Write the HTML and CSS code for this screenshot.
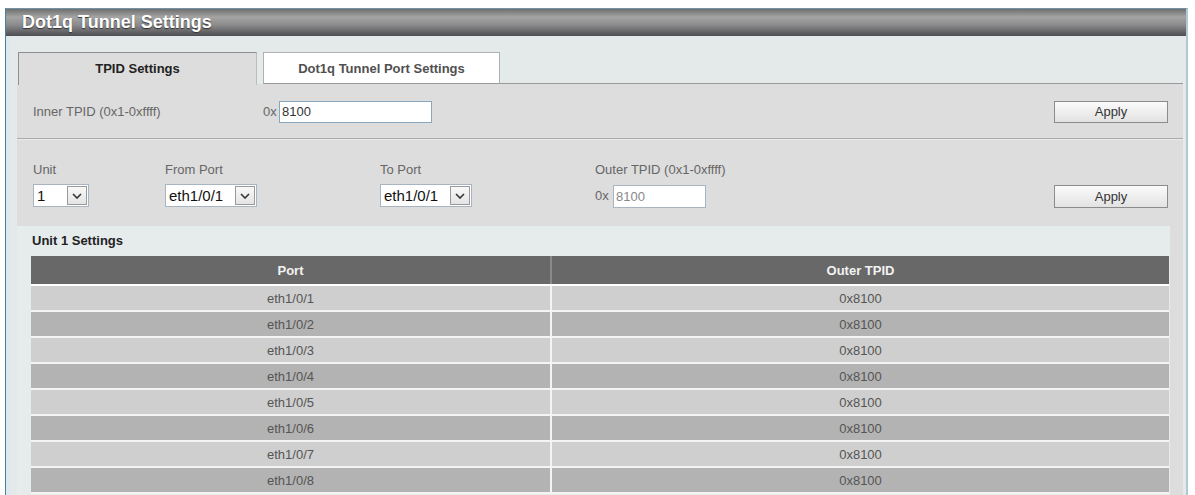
FILE: index.html
```html
<!DOCTYPE html>
<html>
<head>
<meta charset="utf-8">
<title>Dot1q Tunnel Settings</title>
<link rel="stylesheet" href="styles.css">
</head>
<body>
<div class="panel">
  <div class="title">Dot1q Tunnel Settings</div>
  <div class="body">
    <div class="tabs">
      <div class="tab active">TPID Settings</div>
      <div class="tab">Dot1q Tunnel Port Settings</div>
      <div class="tab-rest"></div>
    </div>
    <div class="pane">
      <div class="row-inner">
        <span class="label inner-label">Inner TPID (0x1-0xffff)</span>
        <span class="prefix">0x</span>
        <div class="input inner-input">8100</div>
        <div class="spacer"></div>
        <div class="btn">Apply</div>
      </div>
      <div class="sep"></div>
      <div class="row-outer">
        <div class="field f-unit">
          <span class="label">Unit</span>
          <div class="select s-unit"><span class="sval">1</span><span class="sbtn"><svg width="10" height="6" viewBox="0 0 10 6"><path d="M1 1 L5 5 L9 1" fill="none" stroke="#333" stroke-width="1.6"/></svg></span></div>
        </div>
        <div class="field f-from">
          <span class="label">From Port</span>
          <div class="select s-port"><span class="sval">eth1/0/1</span><span class="sbtn"><svg width="10" height="6" viewBox="0 0 10 6"><path d="M1 1 L5 5 L9 1" fill="none" stroke="#333" stroke-width="1.6"/></svg></span></div>
        </div>
        <div class="field f-to">
          <span class="label">To Port</span>
          <div class="select s-port"><span class="sval">eth1/0/1</span><span class="sbtn"><svg width="10" height="6" viewBox="0 0 10 6"><path d="M1 1 L5 5 L9 1" fill="none" stroke="#333" stroke-width="1.6"/></svg></span></div>
        </div>
        <div class="field f-outer">
          <span class="label">Outer TPID (0x1-0xffff)</span>
          <div class="outer-line"><span class="prefix">0x</span><div class="input outer-input">8100</div></div>
        </div>
        <div class="spacer"></div>
        <div class="btn btn2">Apply</div>
      </div>
      <div class="unitbox">
        <div class="unit-title">Unit 1 Settings</div>
        <table class="grid">
          <thead><tr><th class="c1">Port</th><th>Outer TPID</th></tr></thead>
          <tbody>
            <tr class="odd"><td>eth1/0/1</td><td>0x8100</td></tr>
            <tr class="even"><td>eth1/0/2</td><td>0x8100</td></tr>
            <tr class="odd"><td>eth1/0/3</td><td>0x8100</td></tr>
            <tr class="even"><td>eth1/0/4</td><td>0x8100</td></tr>
            <tr class="odd"><td>eth1/0/5</td><td>0x8100</td></tr>
            <tr class="even"><td>eth1/0/6</td><td>0x8100</td></tr>
            <tr class="odd"><td>eth1/0/7</td><td>0x8100</td></tr>
            <tr class="even"><td>eth1/0/8</td><td>0x8100</td></tr>
          </tbody>
        </table>
      </div>
    </div>
  </div>
</div>
</body>
</html>
```

FILE: styles.css
```css
html, body {
  margin: 0;
  padding: 0;
  background: #ffffff;
  overflow: hidden;
}
body {
  font-family: "Liberation Sans", Arial, sans-serif;
  height: 495px;
}
.panel {
  margin: 8px 0 0 5px;
  width: 1180px;
  border-top: 1px solid #7394a6;
  border-left: 1px solid #4b8190;
  border-right: 2px solid #b3c8d3;
  height: 486px;
  overflow: hidden;
  background: #e4e9ea;
}
.title {
  height: 27px;
  line-height: 27px;
  padding-left: 16px;
  color: #ffffff;
  font-weight: bold;
  font-size: 18px;
  text-shadow: 0 1px 1px #333;
  background: linear-gradient(#6f6f70 0%, #a4a4a4 30%, #8a8a8c 60%, #4d4d52 100%);
}
.body {
  padding: 16px 3px 0 7px;
  border-left: 4px solid #dce9f1;
}
.tabs {
  display: flex;
  align-items: flex-end;
  height: 32px;
  box-sizing: border-box;
}
.tab {
  box-sizing: border-box;
  height: 32px;
  line-height: 32px;
  text-align: center;
  font-size: 13px;
  font-weight: bold;
  color: #505050;
  background: #fff;
  border: 1px solid #b0b0b0;
  border-bottom: 1px solid #9a9a9a;
  width: 237px;
  margin-left: 6px;
}
.tab.active {
  margin-left: 1px;
  width: 239px;
  height: 33px;
  margin-bottom: -1px;
  border: 1px solid #8e8e8e;
  border-bottom: none;
  border-right: 1px solid #bcbcbc;
  background: #dddddd;
  color: #222;
}
.tab-rest {
  flex: 1;
  border-bottom: 1px solid #9a9a9a;
  height: 32px;
  box-sizing: border-box;
}
.pane {
  background: #dddddd;
  height: 430px;
}
.label {
  font-size: 13px;
  color: #666;
}
.prefix {
  font-size: 13px;
  color: #666;
  width: 16px;
}
.row-inner {
  display: flex;
  align-items: center;
  height: 54px;
  padding: 0 15px 0 16px;
}
.inner-label {
  width: 230px;
}
.input {
  box-sizing: border-box;
  background: #fff;
  border: 1px solid #8aa6bc;
  font-size: 13px;
  color: #333;
  padding-left: 2px;
}
.inner-input {
  width: 153px;
  height: 22px;
  line-height: 20px;
  margin-top: 1px;
}
.spacer {
  flex: 1;
}
.btn {
  box-sizing: border-box;
  width: 114px;
  height: 22px;
  line-height: 20px;
  text-align: center;
  font-size: 13px;
  color: #333;
  border: 1px solid #8c8c8c;
  background: linear-gradient(#fbfbfb, #e2e2e2);
  margin-top: 1px;
}
.sep {
  height: 1px;
  background: #a9a9a9;
  border-bottom: 1px solid #ebebeb;
}
.row-outer {
  display: flex;
  align-items: flex-end;
  padding: 22px 15px 19px 16px;
}
.field {
  display: flex;
  flex-direction: column;
}
.field .label {
  line-height: 16px;
  margin-bottom: 6px;
}
.f-unit { width: 132px; }
.f-from { width: 215px; }
.f-to { width: 215px; }
.f-outer { width: 200px; }
.select {
  box-sizing: border-box;
  height: 23px;
  background: #fff;
  border: 1px solid #a8b4c0;
  display: flex;
  align-items: center;
  padding: 0 1px 0 3px;
}
.s-unit { width: 56px; }
.s-port { width: 92px; }
.sval {
  flex: 1;
  font-size: 15px;
  color: #111;
}
.sbtn {
  box-sizing: border-box;
  width: 20px;
  height: 19px;
  border: 1px solid #9a9a9a;
  background: linear-gradient(#f8f8f8, #e4e4e4);
  display: flex;
  align-items: center;
  justify-content: center;
}
.outer-line {
  display: flex;
  align-items: center;
  height: 23px;
}
.outer-line .prefix {
  width: 18px;
}
.outer-input {
  width: 93px;
  height: 23px;
  line-height: 21px;
  color: #888;
  border-color: #a8b4c0;
  margin-top: 1px;
}
.btn2 {
  height: 23px;
  line-height: 21px;
  margin-bottom: -1px;
}
.unitbox {
  background: #e6ebec;
  margin-right: 13px;
  padding: 0 1px 0 14px;
  height: 300px;
}
.unit-title {
  font-size: 13px;
  font-weight: bold;
  color: #222;
  height: 30px;
  line-height: 30px;
  padding-left: 1px;
}
.grid {
  width: 1138px;
  border-collapse: collapse;
  font-size: 13px;
}
.grid th {
  background: #686868;
  color: #f2f2f2;
  font-weight: bold;
  height: 28px;
  padding: 0;
  border-bottom: 2px solid #fff;
}
.grid th.c1 {
  width: 519px;
  border-right: 2px solid #8a8a8a;
}
.grid td {
  height: 24px;
  padding: 0;
  text-align: center;
  color: #555;
  border-bottom: 2px solid #f4f4f4;
}
.grid td:first-child {
  border-right: 2px solid #f4f4f4;
}
.grid tr.odd td { background: #cfcfcf; }
.grid tr.even td { background: #b3b3b3; }
```
